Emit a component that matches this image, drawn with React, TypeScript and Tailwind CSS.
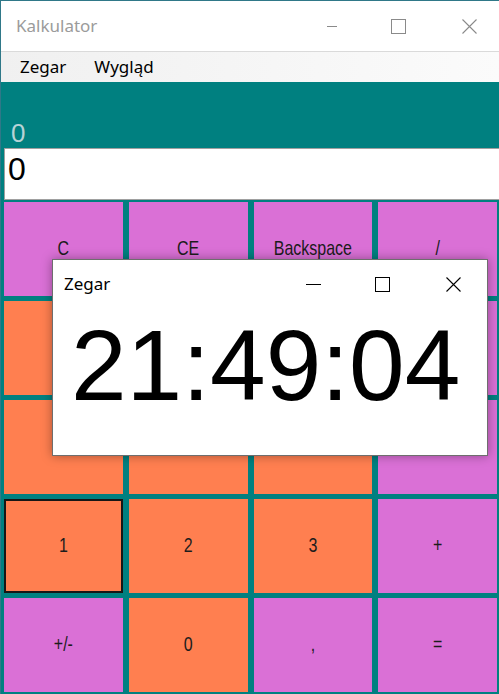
import React from 'react';

type Key = { label: string; tone: 'pink' | 'orange'; focused?: boolean };

// labels of keys hidden behind the clock window are left blank
const keys: Key[] = [
  { label: 'C', tone: 'pink' },
  { label: 'CE', tone: 'pink' },
  { label: 'Backspace', tone: 'pink' },
  { label: '/', tone: 'pink' },
  { label: '', tone: 'orange' },
  { label: '', tone: 'orange' },
  { label: '', tone: 'orange' },
  { label: '', tone: 'pink' },
  { label: '', tone: 'orange' },
  { label: '', tone: 'orange' },
  { label: '', tone: 'orange' },
  { label: '', tone: 'pink' },
  { label: '1', tone: 'orange', focused: true },
  { label: '2', tone: 'orange' },
  { label: '3', tone: 'orange' },
  { label: '+', tone: 'pink' },
  { label: '+/-', tone: 'pink' },
  { label: '0', tone: 'orange' },
  { label: ',', tone: 'pink' },
  { label: '=', tone: 'pink' },
];

function MinIcon({ color, w }: { color: string; w: number }) {
  return (
    <svg width={w} height="15" viewBox={`0 0 ${w} 15`} className="block">
      <line x1="0" y1="7.5" x2={w} y2="7.5" stroke={color} strokeWidth="1" />
    </svg>
  );
}

function MaxIcon({ color }: { color: string }) {
  return (
    <svg width="15" height="15" viewBox="0 0 15 15" className="block">
      <rect x="0.5" y="0.5" width="14" height="14" fill="none" stroke={color} strokeWidth="1" />
    </svg>
  );
}

function CloseIcon({ color }: { color: string }) {
  return (
    <svg width="15" height="15" viewBox="0 0 15 15" className="block">
      <path d="M0.5 0.5 L14.5 14.5 M14.5 0.5 L0.5 14.5" stroke={color} strokeWidth="1.1" fill="none" />
    </svg>
  );
}

function CalcKey({ k }: { k: Key }) {
  return (
    <div
      className={
        'flex items-center justify-center ' +
        (k.tone === 'pink' ? 'bg-[#da70d6] ' : 'bg-[#ff7f50] ') +
        (k.focused ? 'border-2 border-[#161616]' : '')
      }
    >
      <span className="inline-block scale-y-[1.22] text-[16px] leading-none text-[#1c1c1c] font-['Liberation_Sans',Arial,sans-serif]">
        {k.label}
      </span>
    </div>
  );
}

export default function App() {
  return (
    <div className="relative w-[499px] h-[694px] overflow-hidden bg-[#008080] border-t border-l border-[#2f7888] font-['Noto_Sans',sans-serif]">
      {/* title bar */}
      <div className="flex items-center h-[50px] bg-white">
        <span className="pl-[15px] text-[17px] text-[#9b9b9b]">Kalkulator</span>
        <div className="ml-auto flex items-center pr-[22px]">
          <MinIcon color="#8a8a8a" w={10} />
          <div className="ml-[54px]"><MaxIcon color="#8a8a8a" /></div>
          <div className="ml-[56px]"><CloseIcon color="#8a8a8a" /></div>
        </div>
      </div>

      {/* menu */}
      <div className="flex items-center h-[31px] border-t border-[#dadada] bg-linear-to-r from-[#f0f0f0] to-[#fbfbfb] text-[17px] text-black">
        <span className="pl-[19px]">Zegar</span>
        <span className="pl-[28px]">Wygląd</span>
      </div>

      {/* display */}
      <div className="flex items-end h-[66px] pl-[10px] pb-[2px] font-['Liberation_Sans',Arial,sans-serif]">
        <span className="text-[26px] leading-none text-[#b7d3d6]">0</span>
      </div>
      <div className="flex items-start h-[52px] ml-[3px] pt-[4px] pl-[3px] bg-white border-t border-l border-b border-[#a0a0a0] font-['Liberation_Sans',Arial,sans-serif]">
        <span className="text-[32px] leading-none text-black">0</span>
      </div>

      {/* keypad */}
      <div className="grid w-[496px] grid-cols-4 auto-rows-[94px] gap-x-[6px] gap-y-[5px] mt-[2px] pl-[3px]">
        {keys.map((k, i) => (
          <CalcKey key={i} k={k} />
        ))}
      </div>

      {/* clock dialog */}
      <div className="absolute left-[51px] top-[258px] w-[436px] h-[197px] bg-white border border-[#6e6e6e] shadow-[0_0_10px_rgba(0,0,0,0.35)]">
        <div className="flex items-center h-[48px]">
          <span className="pl-[11px] text-[17px] text-black">Zegar</span>
          <div className="ml-auto flex items-center pr-[26px]">
            <MinIcon color="#000" w={15} />
            <div className="ml-[54px]"><MaxIcon color="#000" /></div>
            <div className="ml-[56px]"><CloseIcon color="#000" /></div>
          </div>
        </div>
        <div className="mt-[7px] pl-[18px] text-[100px] leading-none text-black font-['Liberation_Sans',Arial,sans-serif]">
          21:49:04
        </div>
      </div>
    </div>
  );
}
